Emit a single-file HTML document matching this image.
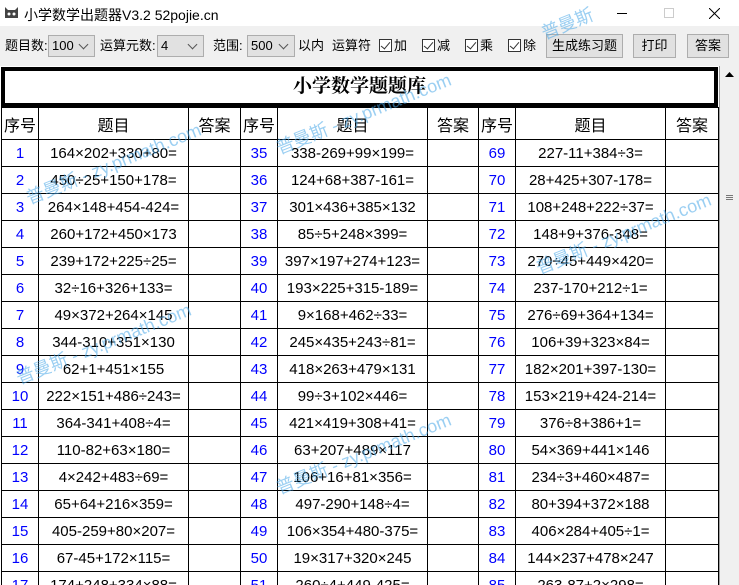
<!DOCTYPE html>
<html><head><meta charset="utf-8"><style>
*{margin:0;padding:0;box-sizing:border-box}
body{width:739px;height:585px;overflow:hidden;background:#f0f0f0;position:relative;font-family:"Liberation Sans","Noto Sans CJK SC",sans-serif;color:#000}
.tb{position:absolute;left:0;top:0;width:739px;height:26px;background:#fff}
.tt{position:absolute;left:24px;top:5px;font-size:14px}
.ab{position:absolute;font-size:13px;top:35px;line-height:22px}
.sel{position:absolute;top:35px;height:22px;border:1px solid #adadad;background:#e1e1e1;font-size:13px;line-height:20px;padding-left:3px}
.sel:after{content:"";position:absolute;right:7px;top:5px;width:6px;height:6px;border-right:1px solid #555;border-bottom:1px solid #555;transform:rotate(45deg)}
.cb{position:absolute;top:39px;width:13px;height:13px;border:1px solid #333;background:#fff}
.cb:after{content:"";position:absolute;left:3px;top:0px;width:4px;height:8px;border-right:1.5px solid #333;border-bottom:1.5px solid #333;transform:rotate(40deg)}
.btn{position:absolute;top:34px;height:24px;border:1px solid #adadad;background:#e1e1e1;font-size:13px;line-height:22px;text-align:center}
.content{position:absolute;left:0;top:66px;width:719px;height:519px;background:#fff;overflow:hidden}
.box{position:absolute;left:1px;top:1px;width:717px;height:40px;border:4px solid #000;text-align:center;font:bold 19px "Liberation Serif","Noto Serif CJK SC",serif;line-height:32px}
table{position:absolute;left:1px;top:41px;border-collapse:collapse;table-layout:fixed;width:717px}
td{border:1px solid #000;height:27px;text-align:center;font-size:15px;white-space:nowrap;overflow:hidden;padding:0}
tr.h td{height:32px;font-size:16px}
td.n{color:#00f}
.sb{position:absolute;left:719px;top:66px;width:20px;height:519px;background:#f0f0f0;border-left:1px solid #a0a0a0}
.wm{position:absolute;color:#4aa8e8;opacity:.55;font-size:18px;transform:rotate(-22deg);white-space:nowrap;pointer-events:none}
</style></head><body>
<div class="tb">
<svg style="position:absolute;left:4px;top:6px" width="15" height="13" viewBox="0 0 15 13"><path d="M1 1 L4 4 L11 4 L14 1 L14 12 L1 12Z" fill="#444"/><circle cx="5" cy="8" r="1.5" fill="#fff"/><circle cx="10" cy="8" r="1.5" fill="#fff"/></svg>
<div class="tt">小学数学出题器V3.2 52pojie.cn</div>
<div style="position:absolute;left:617px;top:13px;width:10px;border-top:1px solid #000"></div>
<div style="position:absolute;left:664px;top:8px;width:10px;height:10px;border:1px solid #ccc"></div>
<svg style="position:absolute;left:709px;top:8px" width="11" height="11"><path d="M0 0L11 11M11 0L0 11" stroke="#000" stroke-width="1"/></svg>
</div>
<div class="ab" style="left:5px">题目数:</div>
<div class="sel" style="left:48px;width:47px">100</div>
<div class="ab" style="left:100px">运算元数:</div>
<div class="sel" style="left:157px;width:47px">4</div>
<div class="ab" style="left:213px">范围:</div>
<div class="sel" style="left:247px;width:48px">500</div>
<div class="ab" style="left:298px">以内</div>
<div class="ab" style="left:332px">运算符</div>
<div class="cb" style="left:379px"></div><div class="ab" style="left:394px">加</div>
<div class="cb" style="left:422px"></div><div class="ab" style="left:437px">减</div>
<div class="cb" style="left:465px"></div><div class="ab" style="left:480px">乘</div>
<div class="cb" style="left:508px"></div><div class="ab" style="left:523px">除</div>
<div class="btn" style="left:546px;width:77px">生成练习题</div>
<div class="btn" style="left:633px;width:43px">打印</div>
<div class="btn" style="left:687px;width:42px">答案</div>
<div class="content">
<div class="box">小学数学题题库</div>
<table>
<colgroup><col style="width:37px"><col style="width:150px"><col style="width:52px"><col style="width:37px"><col style="width:150px"><col style="width:51px"><col style="width:37px"><col style="width:150px"><col style="width:53px"></colgroup>
<tr class="h"><td>序号</td><td>题目</td><td>答案</td><td>序号</td><td>题目</td><td>答案</td><td>序号</td><td>题目</td><td>答案</td></tr>
<tr><td class="n">1</td><td>164×202+330+80=</td><td></td><td class="n">35</td><td>338-269+99×199=</td><td></td><td class="n">69</td><td>227-11+384÷3=</td><td></td></tr>
<tr><td class="n">2</td><td>450÷25+150+178=</td><td></td><td class="n">36</td><td>124+68+387-161=</td><td></td><td class="n">70</td><td>28+425+307-178=</td><td></td></tr>
<tr><td class="n">3</td><td>264×148+454-424=</td><td></td><td class="n">37</td><td>301×436+385×132</td><td></td><td class="n">71</td><td>108+248+222÷37=</td><td></td></tr>
<tr><td class="n">4</td><td>260+172+450×173</td><td></td><td class="n">38</td><td>85÷5+248×399=</td><td></td><td class="n">72</td><td>148+9+376-348=</td><td></td></tr>
<tr><td class="n">5</td><td>239+172+225÷25=</td><td></td><td class="n">39</td><td>397×197+274+123=</td><td></td><td class="n">73</td><td>270÷45+449×420=</td><td></td></tr>
<tr><td class="n">6</td><td>32÷16+326+133=</td><td></td><td class="n">40</td><td>193×225+315-189=</td><td></td><td class="n">74</td><td>237-170+212÷1=</td><td></td></tr>
<tr><td class="n">7</td><td>49×372+264×145</td><td></td><td class="n">41</td><td>9×168+462÷33=</td><td></td><td class="n">75</td><td>276÷69+364+134=</td><td></td></tr>
<tr><td class="n">8</td><td>344-310+351×130</td><td></td><td class="n">42</td><td>245×435+243÷81=</td><td></td><td class="n">76</td><td>106+39+323×84=</td><td></td></tr>
<tr><td class="n">9</td><td>62+1+451×155</td><td></td><td class="n">43</td><td>418×263+479×131</td><td></td><td class="n">77</td><td>182×201+397-130=</td><td></td></tr>
<tr><td class="n">10</td><td>222×151+486÷243=</td><td></td><td class="n">44</td><td>99÷3+102×446=</td><td></td><td class="n">78</td><td>153×219+424-214=</td><td></td></tr>
<tr><td class="n">11</td><td>364-341+408÷4=</td><td></td><td class="n">45</td><td>421×419+308+41=</td><td></td><td class="n">79</td><td>376÷8+386+1=</td><td></td></tr>
<tr><td class="n">12</td><td>110-82+63×180=</td><td></td><td class="n">46</td><td>63+207+489×117</td><td></td><td class="n">80</td><td>54×369+441×146</td><td></td></tr>
<tr><td class="n">13</td><td>4×242+483÷69=</td><td></td><td class="n">47</td><td>106+16+81×356=</td><td></td><td class="n">81</td><td>234÷3+460×487=</td><td></td></tr>
<tr><td class="n">14</td><td>65+64+216×359=</td><td></td><td class="n">48</td><td>497-290+148÷4=</td><td></td><td class="n">82</td><td>80+394+372×188</td><td></td></tr>
<tr><td class="n">15</td><td>405-259+80×207=</td><td></td><td class="n">49</td><td>106×354+480-375=</td><td></td><td class="n">83</td><td>406×284+405÷1=</td><td></td></tr>
<tr><td class="n">16</td><td>67-45+172×115=</td><td></td><td class="n">50</td><td>19×317+320×245</td><td></td><td class="n">84</td><td>144×237+478×247</td><td></td></tr>
<tr><td class="n">17</td><td>174+248+334×88=</td><td></td><td class="n">51</td><td>260÷4+449-425=</td><td></td><td class="n">85</td><td>263-87+2×298=</td><td></td></tr>
</table>
</div>
<div class="sb">
<svg style="position:absolute;left:5px;top:6px" width="9" height="5"><path d="M0 5L4.5 0L9 5Z" fill="#000"/></svg>
<div style="position:absolute;left:6px;top:129px;width:7px;height:5px;border-top:1px solid #777;border-bottom:1px solid #777"></div>
<div style="position:absolute;left:6px;top:131px;width:7px;border-top:1px solid #777"></div>
</div>
<div class="wm" style="left:20px;top:150px">普曼斯 - zy.prmath.com</div>
<div class="wm" style="left:270px;top:100px">普曼斯 - zy.prmath.com</div>
<div class="wm" style="left:10px;top:330px">普曼斯 - zy.prmath.com</div>
<div class="wm" style="left:270px;top:440px">普曼斯 - zy.prmath.com</div>
<div class="wm" style="left:530px;top:220px">普曼斯 - zy.prmath.com</div>
<div class="wm" style="left:540px;top:10px">普曼斯</div>
</body></html>
